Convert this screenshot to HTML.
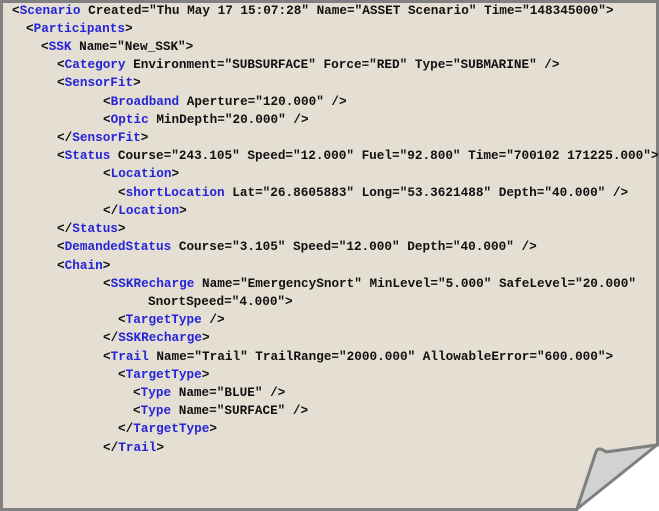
<!DOCTYPE html><html><head><style>
body{margin:0;width:659px;height:511px;background:#fff;position:relative;overflow:hidden}
svg{position:absolute;left:0;top:0}
.l{position:absolute;font:bold 12.7px/14px "Liberation Mono",monospace;color:#111;white-space:pre}
b{font-weight:bold;color:#2424d8}
</style></head><body>
<svg width="659" height="511"><path d="M1.5,1.5 H657.5 V445 L606,452 Q598,446 596,452 L577,509.5 H1.5 Z" fill="#e5ded3" stroke="#808080" stroke-width="3"/>
<path d="M596,452 Q598,446 606,452 L657,445 L577,509 Z" fill="#d2d2d2" stroke="#808080" stroke-width="3" stroke-linejoin="round"/></svg>
<div class="l" style="left:12px;top:4px">&lt;<b>Scenario</b> Created="Thu May 17 15:07:28" Name="ASSET Scenario" Time="148345000"&gt;</div>
<div class="l" style="left:26px;top:22px">&lt;<b>Participants</b>&gt;</div>
<div class="l" style="left:41px;top:40px">&lt;<b>SSK</b> Name="New_SSK"&gt;</div>
<div class="l" style="left:57px;top:58px">&lt;<b>Category</b> Environment="SUBSURFACE" Force="RED" Type="SUBMARINE" /&gt;</div>
<div class="l" style="left:57px;top:76px">&lt;<b>SensorFit</b>&gt;</div>
<div class="l" style="left:103px;top:95px">&lt;<b>Broadband</b> Aperture="120.000" /&gt;</div>
<div class="l" style="left:103px;top:113px">&lt;<b>Optic</b> MinDepth="20.000" /&gt;</div>
<div class="l" style="left:57px;top:131px">&lt;/<b>SensorFit</b>&gt;</div>
<div class="l" style="left:57px;top:149px">&lt;<b>Status</b> Course="243.105" Speed="12.000" Fuel="92.800" Time="700102 171225.000"&gt;</div>
<div class="l" style="left:103px;top:167px">&lt;<b>Location</b>&gt;</div>
<div class="l" style="left:118px;top:186px">&lt;<b>shortLocation</b> Lat="26.8605883" Long="53.3621488" Depth="40.000" /&gt;</div>
<div class="l" style="left:103px;top:204px">&lt;/<b>Location</b>&gt;</div>
<div class="l" style="left:57px;top:222px">&lt;/<b>Status</b>&gt;</div>
<div class="l" style="left:57px;top:240px">&lt;<b>DemandedStatus</b> Course="3.105" Speed="12.000" Depth="40.000" /&gt;</div>
<div class="l" style="left:57px;top:259px">&lt;<b>Chain</b>&gt;</div>
<div class="l" style="left:103px;top:277px">&lt;<b>SSKRecharge</b> Name="EmergencySnort" MinLevel="5.000" SafeLevel="20.000"</div>
<div class="l" style="left:148px;top:295px">SnortSpeed="4.000"&gt;</div>
<div class="l" style="left:118px;top:313px">&lt;<b>TargetType</b> /&gt;</div>
<div class="l" style="left:103px;top:331px">&lt;/<b>SSKRecharge</b>&gt;</div>
<div class="l" style="left:103px;top:350px">&lt;<b>Trail</b> Name="Trail" TrailRange="2000.000" AllowableError="600.000"&gt;</div>
<div class="l" style="left:118px;top:368px">&lt;<b>TargetType</b>&gt;</div>
<div class="l" style="left:133px;top:386px">&lt;<b>Type</b> Name="BLUE" /&gt;</div>
<div class="l" style="left:133px;top:404px">&lt;<b>Type</b> Name="SURFACE" /&gt;</div>
<div class="l" style="left:118px;top:422px">&lt;/<b>TargetType</b>&gt;</div>
<div class="l" style="left:103px;top:441px">&lt;/<b>Trail</b>&gt;</div>
</body></html>
